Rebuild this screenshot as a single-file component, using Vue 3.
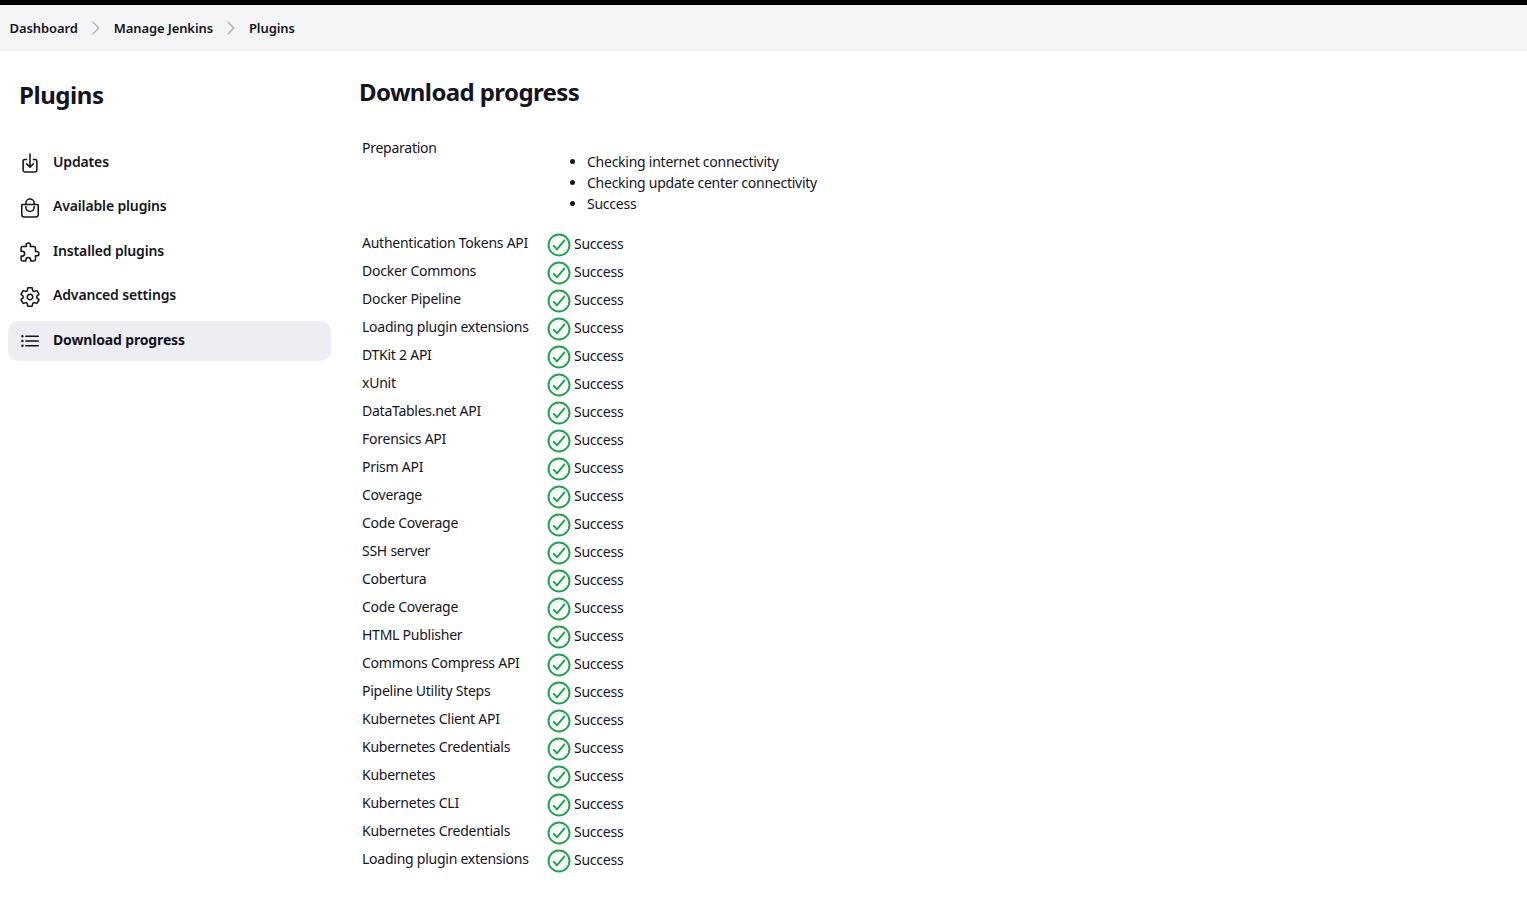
<script setup>
const crumbs = ["Dashboard", "Manage Jenkins", "Plugins"];

const navItems = [
  { label: "Updates", icon: "download" },
  { label: "Available plugins", icon: "bag" },
  { label: "Installed plugins", icon: "puzzle" },
  { label: "Advanced settings", icon: "settings" },
  { label: "Download progress", icon: "list", active: true }
];

const checks = ["Checking internet connectivity", "Checking update center connectivity", "Success"];

const jobs = [
  "Authentication Tokens API",
  "Docker Commons",
  "Docker Pipeline",
  "Loading plugin extensions",
  "DTKit 2 API",
  "xUnit",
  "DataTables.net API",
  "Forensics API",
  "Prism API",
  "Coverage",
  "Code Coverage",
  "SSH server",
  "Cobertura",
  "Code Coverage",
  "HTML Publisher",
  "Commons Compress API",
  "Pipeline Utility Steps",
  "Kubernetes Client API",
  "Kubernetes Credentials",
  "Kubernetes",
  "Kubernetes CLI",
  "Kubernetes Credentials",
  "Loading plugin extensions"
];
</script>

<template>
  <div class="page">
    <div class="top-bar"></div>
    <nav class="breadcrumbs">
      <template v-for="(crumb, i) in crumbs" :key="crumb">
        <span class="crumb">{{ crumb }}</span>
        <svg v-if="i < crumbs.length - 1" class="chevron" viewBox="0 0 512 512" aria-hidden="true">
          <path d="M184 112l144 144-144 144" />
        </svg>
      </template>
    </nav>

    <div class="layout">
      <aside class="side">
        <h1 class="side-title">Plugins</h1>
        <ul class="nav">
          <li v-for="item in navItems" :key="item.label" class="nav-item" :class="{ active: item.active }">
            <svg class="nav-icon" viewBox="0 0 512 512" aria-hidden="true">
              <template v-if="item.icon === 'download'">
                <path d="M336 176h40a40 40 0 0140 40v208a40 40 0 01-40 40H136a40 40 0 01-40-40V216a40 40 0 0140-40h40" />
                <path d="M176 272l80 80 80-80M256 48v288" />
              </template>
              <template v-else-if="item.icon === 'bag'">
                <path d="M80 176a16 16 0 00-16 16v216c0 30.24 25.76 56 56 56h272c30.24 0 56-24.51 56-54.75V192a16 16 0 00-16-16zM160 176v-32a96 96 0 0196-96h0a96 96 0 0196 96v32" />
                <path d="M160 224v16a96 96 0 0096 96h0a96 96 0 0096-96v-16" />
              </template>
              <path
                v-else-if="item.icon === 'puzzle'"
                d="M413.66 246.1H386a2 2 0 01-2-2v-77.24A38.86 38.86 0 00345.14 128H267.9a2 2 0 01-2-2V98.34c0-27.14-21.5-49.86-48.64-50.33a49.53 49.53 0 00-50.4 49.51V126a2 2 0 01-2 2H87.62A39.74 39.74 0 0048 167.62V238a2 2 0 002 2h26.91c29.37 0 53.68 25.48 54.09 54.85.42 29.87-23.51 57.15-53.29 57.15H50a2 2 0 00-2 2v70.38A39.74 39.74 0 0087.62 464H158a2 2 0 002-2v-20.93c0-30.28 24.75-56.35 55-57.06 30.1-.7 57 20.31 57 50.28V462a2 2 0 002 2h71.14A38.86 38.86 0 00384 425.14v-78a2 2 0 012-2h28.48c27.63 0 49.52-22.67 49.52-50.4s-23.2-48.64-50.34-48.64z"
              />
              <path
                v-else-if="item.icon === 'settings'"
                d="M262.29 192.31a64 64 0 1057.4 57.4 64.13 64.13 0 00-57.4-57.4zM416.39 256a154.34 154.34 0 01-1.53 20.79l45.21 35.46a10.81 10.81 0 012.45 13.75l-42.77 74a10.81 10.81 0 01-13.14 4.59l-44.9-18.08a16.11 16.11 0 00-15.17 1.75A164.48 164.48 0 01325 400.8a15.94 15.94 0 00-8.82 12.14l-6.73 47.89a11.08 11.08 0 01-10.68 9.17h-85.54a11.11 11.11 0 01-10.69-8.87l-6.72-47.82a16.07 16.07 0 00-9-12.22 155.3 155.3 0 01-21.46-12.57 16 16 0 00-15.11-1.71l-44.89 18.07a10.81 10.81 0 01-13.14-4.58l-42.77-74a10.8 10.8 0 012.45-13.75l38.21-30a16.05 16.05 0 006-14.08c-.36-4.17-.58-8.33-.58-12.5s.21-8.27.58-12.35a16 16 0 00-6.07-13.94l-38.19-30A10.81 10.81 0 0149.48 186l42.77-74a10.81 10.81 0 0113.14-4.59l44.9 18.08a16.11 16.11 0 0015.17-1.75A164.48 164.48 0 01187 111.2a15.94 15.94 0 008.82-12.14l6.73-47.89A11.08 11.08 0 01213.23 42h85.54a11.11 11.11 0 0110.69 8.87l6.72 47.82a16.07 16.07 0 009 12.22 155.3 155.3 0 0121.46 12.57 16 16 0 0015.11 1.71l44.89-18.07a10.81 10.81 0 0113.14 4.58l42.77 74a10.8 10.8 0 01-2.45 13.75l-38.21 30a16.05 16.05 0 00-6.05 14.08c.33 4.14.55 8.3.55 12.47z"
              />
              <template v-else>
                <path d="M160 144h288M160 256h288M160 368h288" />
                <circle class="dot" cx="80" cy="144" r="16" />
                <circle class="dot" cx="80" cy="256" r="16" />
                <circle class="dot" cx="80" cy="368" r="16" />
              </template>
            </svg>
            <span class="nav-label">{{ item.label }}</span>
          </li>
        </ul>
      </aside>

      <main class="main">
        <h1 class="main-title">Download progress</h1>
        <table class="jobs">
          <tbody>
            <tr class="prep">
              <td class="name">Preparation</td>
              <td>
                <ul class="checks">
                  <li v-for="check in checks" :key="check">{{ check }}</li>
                </ul>
              </td>
            </tr>
            <tr v-for="(job, i) in jobs" :key="i">
              <td class="name">{{ job }}</td>
              <td>
                <div class="status">
                  <svg class="ok-icon" viewBox="0 0 512 512" aria-hidden="true">
                    <path d="M448 256c0-106-86-192-192-192S64 150 64 256s86 192 192 192 192-86 192-192z" />
                    <path d="M352 176L217.6 336 160 272" />
                  </svg>
                  <span>Success</span>
                </div>
              </td>
            </tr>
          </tbody>
        </table>
      </main>
    </div>
  </div>
</template>

<style>
html,
body {
  margin: 0;
  background: #fff;
}
</style>

<style scoped>
.page {
  font-family: "Noto Sans", sans-serif;
  font-size: 14px;
  line-height: 21px;
  letter-spacing: -0.25px;
  color: #14141f;
}

.top-bar {
  height: 5px;
  background: #000;
}

.breadcrumbs {
  display: flex;
  align-items: center;
  height: 46px;
  padding-left: 9.5px;
  background: #f5f5f7;
  font-size: 13px;
  font-weight: 600;
  letter-spacing: -0.1px;
}

.chevron {
  width: 20px;
  height: 20px;
  margin: 0 8px;
  fill: none;
  stroke: #a9a9b0;
  stroke-width: 32;
  stroke-linecap: round;
  stroke-linejoin: round;
}

.layout {
  display: flex;
}

.side {
  width: 323px;
  margin-left: 8px;
  flex-shrink: 0;
}

.side-title {
  margin: 26px 0 0 11px;
  font-size: 24px;
  line-height: 36px;
  font-weight: 700;
  letter-spacing: -0.43px;
}

.nav {
  list-style: none;
  margin: 30px 0 0;
  padding: 0;
  display: flex;
  flex-direction: column;
  gap: 4.5px;
}

.nav-item {
  display: flex;
  align-items: center;
  gap: 12px;
  height: 40px;
  padding-left: 11px;
  border-radius: 10px;
  font-weight: 600;
  letter-spacing: -0.15px;
}

.nav-label {
  padding-bottom: 4px;
}

.nav-item.active {
  background: #edeef3;
  font-weight: 700;
}

.nav-icon {
  width: 22px;
  height: 22px;
  flex-shrink: 0;
  fill: none;
  stroke: #14141f;
  stroke-width: 36;
  stroke-linecap: round;
  stroke-linejoin: round;
}

.nav-icon .dot {
  fill: #14141f;
  stroke-width: 24;
}

.main {
  margin-left: 28px;
}

.main-title {
  margin: 23px 0 0;
  font-size: 24px;
  line-height: 36px;
  font-weight: 700;
  letter-spacing: -0.6px;
}

.jobs {
  margin-top: 25px;
  border-collapse: collapse;
}

.jobs td {
  padding: 2px 3px;
  vertical-align: top;
}

.jobs td.name {
  width: 168px;
  padding-top: 1px;
  padding-right: 14px;
}

.jobs .prep td.name {
  padding-top: 2px;
}

.checks {
  margin: 14px 0 15px;
  padding-left: 40px;
}

.status {
  display: flex;
  align-items: flex-start;
  height: 24px;
}

.ok-icon {
  width: 28px;
  height: 28px;
  margin: -2px 1px 0 -2px;
  flex-shrink: 0;
  fill: none;
  stroke: #1ea64b;
  stroke-width: 36;
  stroke-linecap: round;
  stroke-linejoin: round;
}
</style>
